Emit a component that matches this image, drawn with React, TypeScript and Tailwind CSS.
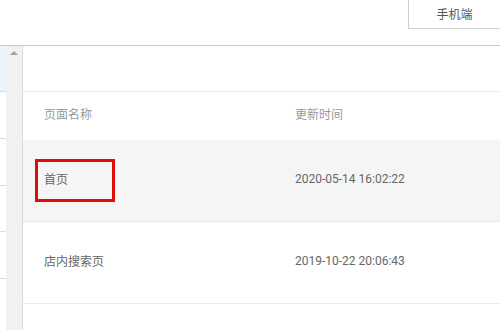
import React from 'react';

const rows = [
  { name: '首页', time: '2020-05-14 16:02:22', active: true },
  { name: '店内搜索页', time: '2019-10-22 20:06:43', active: false },
];

const font = { fontFamily: '"Noto Sans CJK SC", "Noto Sans", sans-serif' };

const App: React.FC = () => {
  return (
    <div className="w-[500px] h-[330px] bg-white overflow-hidden flex flex-col text-[12px]" style={font}>
      {/* top bar */}
      <div className="h-[46px] shrink-0 border-b border-[#c8c8c8] flex justify-end items-start">
        <button className="w-[92px] h-[29px] border-l border-b border-[#cfcfcf] text-[#555] text-[12px] flex items-center justify-center">
          手机端
        </button>
      </div>

      <div className="flex flex-1 min-h-0">
        {/* left list edge */}
        <div className="w-[6px] flex flex-col">
          <div className="h-[46px] bg-[#eef4fc] border-b border-[#dcdcdc]" />
          <div className="h-[47px] border-b border-[#dcdcdc]" />
          <div className="h-[47px] border-b border-[#dcdcdc]" />
          <div className="h-[46px] border-b border-[#dcdcdc]" />
          <div className="h-[47px] border-b border-[#dcdcdc]" />
        </div>

        {/* scrollbar */}
        <div className="w-[17px] bg-[#f1f1f1] border-r border-[#dadada] flex justify-center pt-[5px]">
          <div className="w-0 h-0 border-l-[4px] border-r-[4px] border-b-[4px] border-l-transparent border-r-transparent border-b-[#a3a3a3]" />
        </div>

        {/* table */}
        <div className="flex-1 flex flex-col">
          <div className="h-[46px] border-b border-[#ececec]" />
          <div className="h-[48px] pb-[4px] flex items-center text-[#999]">
            <div className="w-[272px] pl-[21px]">页面名称</div>
            <div>更新时间</div>
          </div>
          {rows.map(r => (
            <div
              key={r.name}
              className={`h-[82px] pb-[4px] flex items-center border-b border-[#ebebeb] text-[#666] ${
                r.active ? 'bg-[#f5f5f5]' : 'bg-white'
              }`}
            >
              <div className="w-[272px] pl-[21px]">
                <span className="relative">
                  {r.name}
                  {r.active && (
                    <span className="absolute left-[-9px] top-[-11px] w-[80px] h-[43px] border-[3px] border-[#e00b0b]" />
                  )}
                </span>
              </div>
              <div className="text-[12px]" style={{ fontFamily: 'Roboto, "Noto Sans", sans-serif' }}>
                {r.time}
              </div>
            </div>
          ))}
        </div>
      </div>
    </div>
  );
};

export default App;
